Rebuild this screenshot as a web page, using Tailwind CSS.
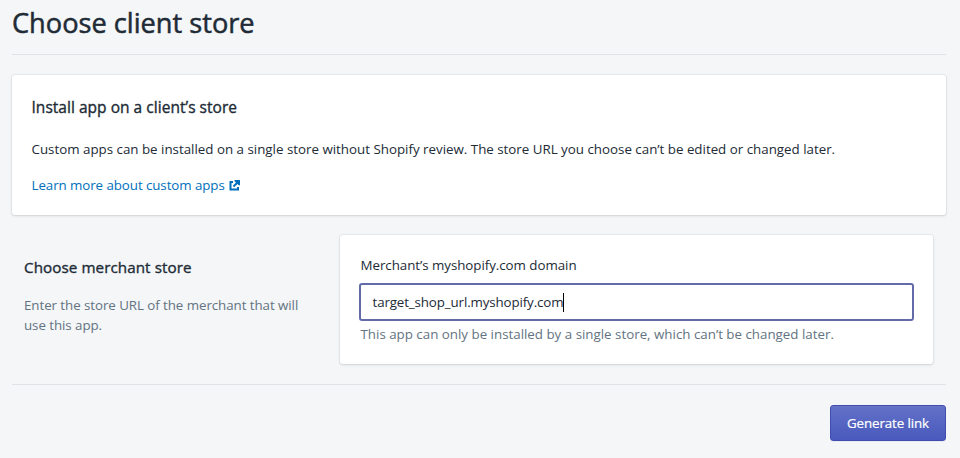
<!DOCTYPE html>
<html lang="en"><head><meta charset="utf-8"><title>Choose client store</title>
<script src="https://cdn.jsdelivr.net/npm/@tailwindcss/browser@4"></script></head>
<body class="h-[458px] overflow-hidden bg-[#f4f6f8] font-['Open_Sans','Noto_Sans',sans-serif] text-[#212b36]">
<main class="ml-3 w-[934px] text-[13.33px] leading-5">
<h1 class="h-[55px] border-b border-[#dfe3e8] pt-[7px] text-[27.2px] leading-8 font-medium whitespace-nowrap [-webkit-text-stroke:0.5px_currentColor]">Choose client store</h1>
<section class="mt-5 h-[140px] rounded-[3px] bg-white px-[19.5px] pt-[22px] shadow-[0_0_0_1px_rgba(63,63,68,.05),0_1px_3px_rgba(63,63,68,.15)]">
<h2 class="text-[15.5px] leading-5 tracking-[0.03px] font-medium [-webkit-text-stroke:0.35px_currentColor]">Install app on a client’s store</h2>
<p class="mt-[22px] whitespace-nowrap">Custom apps can be installed on a single store without Shopify review. The store URL you choose can’t be edited or changed later.</p>
<a class="mt-4 flex items-center gap-1 tracking-[-0.07px] text-[#006fbb]" href="#">Learn more about custom apps
<svg class="size-[11px]" viewBox="0 0 11 11" fill="none" stroke="currentColor" stroke-width="2"><path d="M4 2H1.5v7.5H9V7M4.5 6.5 9 2"/><path d="M5.5 0H11v5.2H9.8L5.5 1.2Z" fill="currentColor" stroke="none"/></svg></a>
</section>
<section class="mt-5 flex h-[129px] justify-between pr-[13px] pl-3">
<div class="w-[290px] pt-[22px]">
<h2 class="text-[15.2px] leading-5 tracking-[0.08px] font-medium [-webkit-text-stroke:0.35px_currentColor]">Choose merchant store</h2>
<p class="mt-[18px] tracking-[-0.06px] text-[#637381]">Enter the store URL of the merchant that will<br>use this app.</p>
</div>
<div class="w-[593px] rounded-[3px] bg-white px-[19px] pt-5 shadow-[0_0_0_1px_rgba(63,63,68,.05),0_1px_3px_rgba(63,63,68,.15)]">
<label class="block pl-[1.5px] tracking-[-0.04px]">Merchant’s myshopify.com domain</label>
<div class="mt-2 flex h-[38px] items-center rounded-[3px] border-2 border-[#626ba8] bg-white pl-[11.5px]"><span class="tracking-[-0.12px]">target_shop_url.myshopify.com</span><span class="h-[19px] w-px bg-black"></span></div>
<p class="mt-[3px] pl-[1.5px] text-[#637381]">This app can only be installed by a single store, which can’t be changed later.</p>
</div>
</section>
<footer class="mt-5 flex justify-end border-t border-[#dfe3e8] pt-5">
<button class="h-9 w-[116px] rounded-[3px] border border-[#3f4eae] bg-linear-to-b from-[#6371c7] to-[#4959bd] tracking-[-0.1px] font-medium text-white shadow-[inset_0_1px_0_#6774c8,0_1px_0_rgba(22,29,37,.05)] [-webkit-text-stroke:0.2px_currentColor]">Generate link</button>
</footer>
</main></body></html>
